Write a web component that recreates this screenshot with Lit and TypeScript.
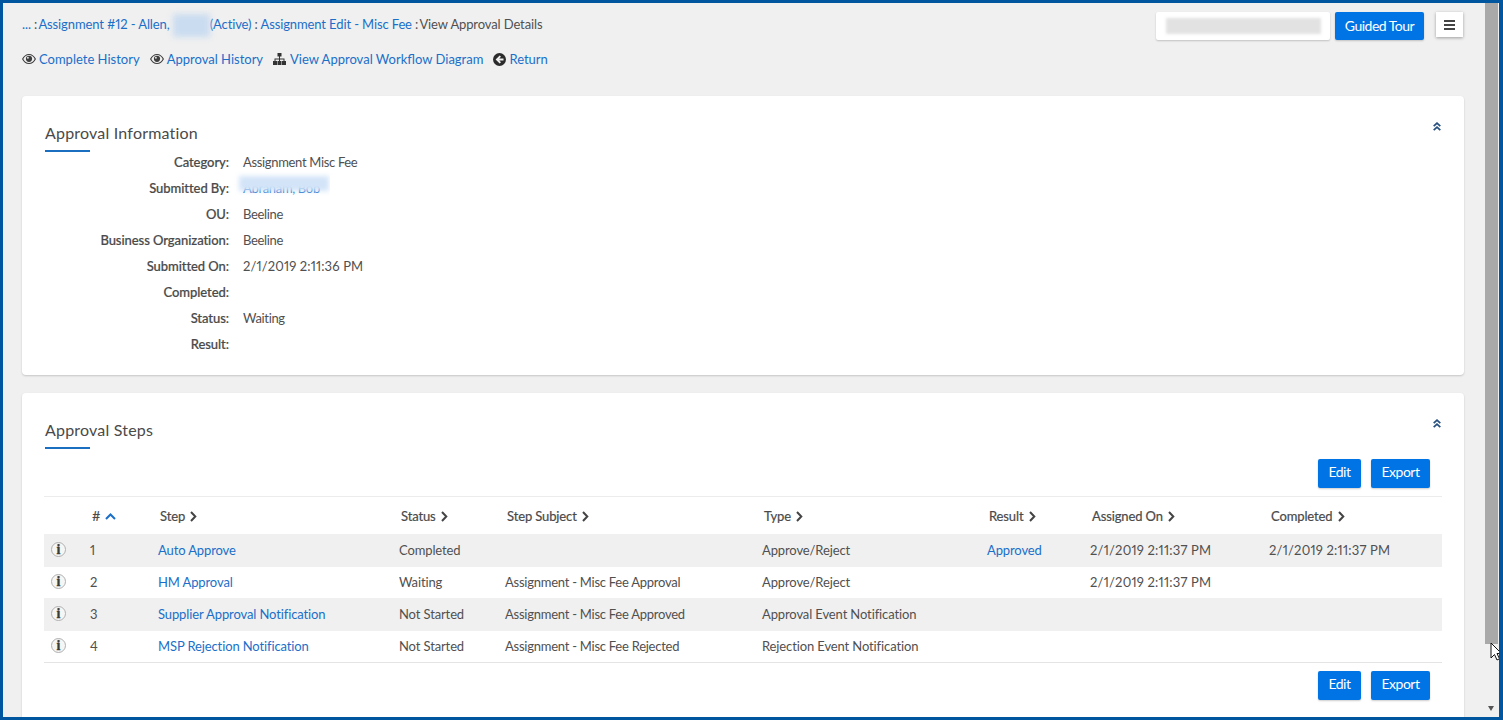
import { LitElement, html, css } from "lit";
import { customElement } from "lit/decorators.js";

const eye = html`<svg class="ic" width="14" height="10" viewBox="0 0 14 10"><path fill="#3f3f3f" d="M7 0C4 0 1.500 2 0 5c1.500 3 4 5 7 5s5.500-2 7-5c-1.500-3-4-5-7-5zm0 1c2.400 0 4.400 1.500 5.700 4-1.300 2.500-3.300 4-5.700 4S2.600 7.500 1.300 5C2.600 2.500 4.600 1 7 1z"/><circle cx="7" cy="4.800" r="3.100" fill="#3f3f3f"/><circle cx="5.900" cy="3.800" r="1" fill="#ddd"/></svg>`;
const sitemap = html`<svg class="ic wide" width="13" height="12" viewBox="0 0 13 12"><path fill="#333" d="M4.500 0h4v3.500h-4zM6 3.500h1v2h4.500V8h-1V6.500H7V8H6V6.500H2.500V8h-1V5.500H6zM0 8h4v4H0zM4.500 8h4v4h-4zM9 8h4v4H9z"/></svg>`;
const back = html`<svg class="ic" width="13" height="13" viewBox="0 0 13 13"><circle cx="6.500" cy="6.500" r="6.500" fill="#2b2b2b"/><path fill="#f0f0f0" d="M6.700 2.400 8 3.700 6.200 5.400H10.500v2.200H6.200L8 9.300l-1.300 1.300-4.100-4.100z"/></svg>`;
const chev = html`<svg class="chev" width="7" height="11" viewBox="0 0 7 11"><path d="M1 1l4.300 4.500L1 10" fill="none" stroke="#444" stroke-width="2"/></svg>`;
const dbl = html`<svg class="dbl" width="8" height="9" viewBox="0 0 8 9"><path d="M.7 4.200 4 1.200l3.300 3M.7 8.200 4 5.200l3.300 3" fill="none" stroke="#27507f" stroke-width="1.800"/></svg>`;

const info: [string, string, string][] = [
  ["Category:", "Assignment Misc Fee", ""],
  ["Submitted By:", "Abraham, Bob", "link"],
  ["OU:", "Beeline", ""],
  ["Business Organization:", "Beeline", ""],
  ["Submitted On:", "2/1/2019 2:11:36 PM", "date"],
  ["Completed:", "", ""],
  ["Status:", "Waiting", ""],
  ["Result:", "", ""],
];
const heads = ["Step", "Status", "Step Subject", "Type", "Result", "Assigned On", "Completed"];
const rows = [
  ["1", "Auto Approve", "Completed", "", "Approve/Reject", "Approved", "2/1/2019 2:11:37 PM", "2/1/2019 2:11:37 PM"],
  ["2", "HM Approval", "Waiting", "Assignment - Misc Fee Approval", "Approve/Reject", "", "2/1/2019 2:11:37 PM", ""],
  ["3", "Supplier Approval Notification", "Not Started", "Assignment - Misc Fee Approved", "Approval Event Notification", "", "", ""],
  ["4", "MSP Rejection Notification", "Not Started", "Assignment - Misc Fee Rejected", "Rejection Event Notification", "", "", ""],
];
const widths = [46, 68, 241, 106, 257, 225, 103, 179, 173];

@customElement("app-root")
export class AppRoot extends LitElement {
  static styles = css`
    :host { display: block; width: 1503px; height: 720px; font-family: Lato, sans-serif; font-size: 13px; color: #505050; font-variant-numeric: proportional-nums; }
    * { box-sizing: border-box; }
    a { color: #1a6fc9; text-decoration: none; }
    .frame { position: relative; width: 1503px; height: 720px; border: 3px solid #00569f; border-right-width: 4px; background: #f0f0f0; overflow: hidden; display: flex; }
    .main { width: 1482px; flex: none; padding: 0 0 0 19px; height: 100%; overflow: hidden; }
    .sb { flex: 1; display: flex; flex-direction: column; background: #f0f0f0; }
    .thumb { width: 13px; height: 641px; background: #a9a9a9; }
    .sb-arrow { margin-top: auto; margin-bottom: 6px; margin-left: 3px; width: 0; height: 0; border: 3.500px solid transparent; border-top: 5px solid #555; border-bottom: 0; }
    .top { display: flex; justify-content: space-between; width: 1441px; height: 93px; }
    .crumbs-wrap { padding-top: 13px; }
    .crumbs { height: 16px; line-height: 16px; position: relative; white-space: nowrap; letter-spacing: -0.12px; }
    .crumbs .first { margin-left: -2px; }
    .crumbs .last { margin-left: -2px; }
    .crumbs .blur { display: inline-block; width: 37px; height: 23px; margin: -4px 0 -4px 0; vertical-align: middle; background: #c9dcf0; filter: blur(3px); }
    .actions { display: flex; margin-top: 19px; height: 16px; line-height: 16px; letter-spacing: 0; align-items: center; }
    .act { display: flex; align-items: center; margin-right: 10px; white-space: nowrap; }
    .ic { margin-right: 3px; flex: none; }
    .ic.wide { margin-right: 4px; }
    .tools { display: flex; align-items: flex-start; padding-top: 9px; }
    .ghost { width: 174px; height: 28px; background: #fff; border-radius: 2px; box-shadow: 0 1px 2px rgba(0,0,0,.2); display: flex; align-items: center; justify-content: center; margin-right: 5px; }
    .ghost i { display: block; width: 155px; height: 16px; background: #e2e2e2; filter: blur(1.500px); }
    .btn { background: #0074e4; color: #fff; border: 0; border-radius: 2px; font: inherit; font-size: 14px; letter-spacing: -0.5px; box-shadow: 0 1px 2px rgba(0,0,0,.2); padding: 0 0 2px; display: flex; align-items: center; justify-content: center; }
    .tour { width: 89px; height: 28px; margin-right: 12px; }
    .ham { width: 27px; height: 25px; background: #fff; box-shadow: 0 1px 3px rgba(0,0,0,.35); display: flex; flex-direction: column; gap: 2px; align-items: center; justify-content: center; }
    .ham i { display: block; width: 11px; height: 2px; background: #444; }
    .card { width: 1442px; background: #fff; border-radius: 4px; box-shadow: 0 1px 2px rgba(0,0,0,.18); position: relative; padding: 28px 22px 0 23px; }
    .c1 { height: 279px; margin-bottom: 18px; }
    .c2 { height: 340px; }
    .dbl { position: absolute; right: 23px; top: 26px; }
    h2 { margin: 0; font-size: 16px; font-weight: 400; line-height: 17px; color: #4a4a4a; letter-spacing: 0.2px; }
    .rule { width: 45px; height: 2px; background: #1a6fc0; margin-top: 9px; }
    .dl { margin-top: -3px; }
    .dr { display: flex; height: 26px; align-items: center; letter-spacing: -0.33px; }
    .dt { width: 207px; margin-left: -23px; padding-left: 23px; text-align: right; font-weight: 500; flex: none; color: #4a4a4a; margin-right: 14px; letter-spacing: -0.06px; -webkit-text-stroke: 0.2px #4a4a4a; }
    .dd { position: relative; }
    .date { letter-spacing: 0.12px; }
    td.date { letter-spacing: 0.2px; }
    .mask { position: absolute; left: -4px; top: -4px; width: 90px; height: 15px; background: #d3e4f8; filter: blur(2.500px); }
    .mask2 { position: absolute; left: 87px; top: -5px; width: 30px; height: 22px; background: #fff; }
    .bar { display: flex; justify-content: flex-end; gap: 10px; padding-right: 12px; height: 29px; }
    .edit { width: 43px; height: 29px; padding-bottom: 4px; }
    .exp { width: 59px; height: 29px; padding-bottom: 4px; }
    .bar1 { margin-top: 10px; }
    table { margin: 8px 0 8px -1px; width: 1398px; border-collapse: separate; border-spacing: 0; table-layout: fixed; border-top: 1px solid #ececec; border-bottom: 1px solid #e4e4e4; letter-spacing: -0.12px; }
    th { height: 37px; padding: 1px 0 0 2px; text-align: left; font-weight: 400; color: #4a4a4a; white-space: nowrap; -webkit-text-stroke: 0.2px #4a4a4a; }
    th .chev { margin-left: 2px; vertical-align: -1px; }
    th .up { margin-left: 1px; vertical-align: 1px; }
    td { height: 31px; padding: 0 0 2px; white-space: nowrap; }
    tr.odd td { height: 33px; background: #f0f0f0; }
    td.subject { letter-spacing: -0.25px; }
    .i { display: flex; width: 15px; height: 15px; margin-left: 7px; border-radius: 50%; background: #f6f6f6; border: 1px solid #b0b0b0; align-items: center; justify-content: center; font: 700 14px "Liberation Serif", serif; color: #3c3c3c; -webkit-text-stroke: 0.3px #3c3c3c; }
    .cursor { position: absolute; left: 1487px; top: 639px; }
  `;
  render() {
    return html`<div class="frame">
      <div class="main">
        <div class="top">
          <div class="crumbs-wrap">
            <div class="crumbs"><a href="#">...</a> : <a class="first" href="#">Assignment #12 - Allen,</a> <span class="blur"></span><a href="#">(Active)</a> : <a href="#">Assignment Edit - Misc Fee</a> : <span class="last">View Approval Details</span></div>
            <div class="actions">
              <span class="act">${eye}<a href="#">Complete History</a></span>
              <span class="act">${eye}<a href="#">Approval History</a></span>
              <span class="act">${sitemap}<a href="#">View Approval Workflow Diagram</a></span>
              <span class="act">${back}<a href="#">Return</a></span>
            </div>
          </div>
          <div class="tools">
            <div class="ghost"><i></i></div>
            <button class="btn tour">Guided Tour</button>
            <div class="ham"><i></i><i></i><i></i></div>
          </div>
        </div>
        <section class="card c1">
          ${dbl}
          <h2>Approval Information</h2>
          <div class="rule"></div>
          <div class="dl">
            ${info.map(([k, v, t]) => html`<div class="dr"><div class="dt">${k}</div><div class="dd ${t}">${t === "link" ? html`<a href="#">${v}</a><span class="mask"></span><span class="mask2"></span>` : v}</div></div>`)}
          </div>
        </section>
        <section class="card c2">
          ${dbl}
          <h2>Approval Steps</h2>
          <div class="rule"></div>
          <div class="bar bar1"><button class="btn edit">Edit</button><button class="btn exp">Export</button></div>
          <table>
            <colgroup>${widths.map((w) => html`<col style="width:${w}px" />`)}</colgroup>
            <thead><tr>
              <th></th>
              <th># <svg class="up" width="11" height="7" viewBox="0 0 11 7"><path d="M1 6l4.500-4.500L10 6" fill="none" stroke="#1a6fc9" stroke-width="2"/></svg></th>
              ${heads.map((h) => html`<th>${h} ${chev}</th>`)}
            </tr></thead>
            <tbody>
              ${rows.map((r, i) => html`<tr class=${i % 2 === 0 ? "odd" : ""}>
                <td><span class="i">i</span></td>
                <td>${r[0]}</td>
                <td><a href="#">${r[1]}</a></td>
                <td>${r[2]}</td>
                <td class="subject">${r[3]}</td>
                <td>${r[4]}</td>
                <td><a href="#">${r[5]}</a></td>
                <td class="date">${r[6]}</td>
                <td class="date">${r[7]}</td>
              </tr>`)}
            </tbody>
          </table>
          <div class="bar"><button class="btn edit">Edit</button><button class="btn exp">Export</button></div>
        </section>
      </div>
      <div class="sb"><div class="thumb"></div><div class="sb-arrow"></div></div>
      <svg class="cursor" width="12" height="19" viewBox="0 0 12 19"><path d="M1 1v15l3.500-3.500L7 18l2.500-1.200L7 11.500h4.500z" fill="#fff" stroke="#111" stroke-width="1"/></svg>
    </div>`;
  }
}
